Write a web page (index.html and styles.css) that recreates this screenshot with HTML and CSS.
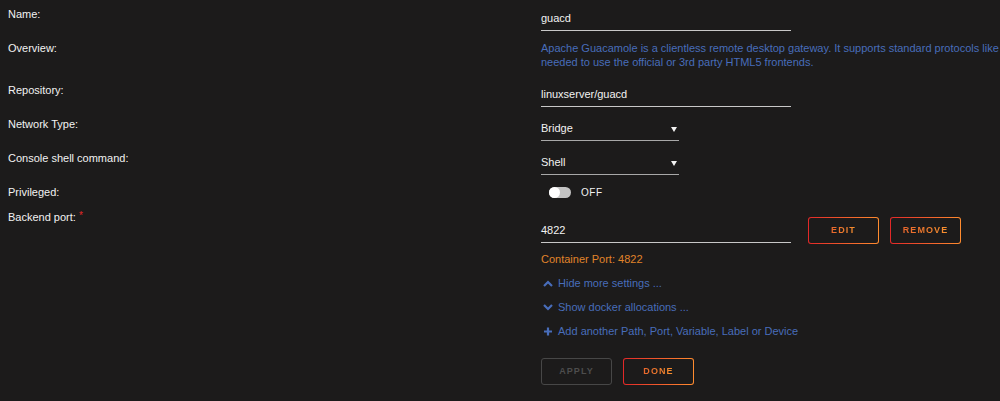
FILE: index.html
```html
<!DOCTYPE html>
<html lang="en">
<head>
  <meta charset="UTF-8" />
  <title>Update Container</title>
  <link rel="stylesheet" href="styles.css">
</head>
<body>
  <div class="form">
    <div class="row">
      <div class="label">Name:</div>
      <div class="value"><div class="field">guacd</div></div>
    </div>
    <div class="row overview-row">
      <div class="label">Overview:</div>
      <div class="value overview">Apache Guacamole is a clientless remote desktop gateway. It supports standard protocols like<br>needed to use the official or 3rd party HTML5 frontends.</div>
    </div>
    <div class="row">
      <div class="label">Repository:</div>
      <div class="value"><div class="field">linuxserver/guacd</div></div>
    </div>
    <div class="row">
      <div class="label">Network Type:</div>
      <div class="value"><div class="field select">Bridge<span class="caret"></span></div></div>
    </div>
    <div class="row">
      <div class="label">Console shell command:</div>
      <div class="value"><div class="field select">Shell<span class="caret"></span></div></div>
    </div>
    <div class="row">
      <div class="label">Privileged:</div>
      <div class="value switch-row">
        <span class="switch"><span class="knob"></span></span>
        <span class="switch-text">OFF</span>
      </div>
    </div>
    <div class="row">
      <div class="label">Backend port: <span class="req">*</span></div>
      <div class="value port-row">
        <div class="field">4822</div>
        <button class="btn"><span>Edit</span></button>
        <button class="btn"><span>Remove</span></button>
      </div>
    </div>
  </div>

  <div class="extra">
    <div class="note">Container Port: 4822</div>
    <div class="link">
      <svg width="10" height="7" viewBox="0 0 10 7"><path d="M1 6 L5 2 L9 6" fill="none" stroke="#486dba" stroke-width="2.2"/></svg>
      Hide more settings ...
    </div>
    <div class="link">
      <svg width="10" height="7" viewBox="0 0 10 7"><path d="M1 1 L5 5 L9 1" fill="none" stroke="#486dba" stroke-width="2.2"/></svg>
      Show docker allocations ...
    </div>
    <div class="link">
      <svg width="10" height="9" viewBox="0 0 10 9"><path d="M5 0.5 V8.5 M1 4.5 H9" fill="none" stroke="#486dba" stroke-width="2.2"/></svg>
      Add another Path, Port, Variable, Label or Device
    </div>
    <div class="actions">
      <button class="btn disabled"><span>Apply</span></button>
      <button class="btn"><span>Done</span></button>
    </div>
  </div>
</body>
</html>
```

FILE: styles.css
```css
body {
  margin: 0;
  background-color: #1c1b1b;
  color: #f2f2f2;
  font-family: "Liberation Sans", Arial, sans-serif;
  font-size: 11px;
  overflow: hidden;
}
.form { padding-top: 7px; }
.row {
  display: grid;
  grid-template-columns: 533px 1fr;
  padding-left: 8px;
  align-items: start;
}
.row + .row { margin-top: 10px; }
.overview-row { padding-bottom: 4px; }
.label { line-height: 14px; }
.req { color: #e22828; font-size: 10px; vertical-align: 2px; }
.value { min-width: 0; }

.field {
  box-sizing: border-box;
  width: 250px;
  height: 24px;
  padding-top: 4px;
  line-height: 15px;
  border-bottom: 1px solid #c8c8c8;
}
.select {
  width: 138px;
  display: flex;
  justify-content: space-between;
  border-bottom-color: #a8a8a8;
}
.caret {
  width: 0;
  height: 0;
  margin: 6px 2px 0 0;
  border-left: 3px solid transparent;
  border-right: 3px solid transparent;
  border-top: 5px solid #f2f2f2;
}

.overview {
  color: #486dba;
  line-height: 14px;
  white-space: nowrap;
}

.switch-row {
  display: flex;
  align-items: center;
  height: 14px;
  padding-left: 8px;
  gap: 10px;
}
.switch {
  display: block;
  width: 22px;
  height: 11px;
  border-radius: 6px;
  background: #c4c4c4;
  position: relative;
}
.knob {
  position: absolute;
  left: 0;
  top: 0;
  width: 11px;
  height: 11px;
  border-radius: 50%;
  background: #ffffff;
}
.switch-text { font-size: 10px; letter-spacing: 0.5px; }

.port-row {
  display: flex;
  align-items: center;
  padding-top: 8px;
  height: 27px;
}
.port-row .field { margin-right: 17px; }
.port-row .btn + .btn { margin-left: 11px; }

.btn {
  box-sizing: border-box;
  width: 71px;
  height: 27px;
  padding: 0 0 2px;
  border: 1px solid transparent;
  border-radius: 3px;
  background: linear-gradient(#1c1b1b, #1c1b1b) padding-box,
              linear-gradient(90deg, #e22828, #ff8c2f) border-box;
  font-family: "Liberation Sans", Arial, sans-serif;
  font-size: 9px;
  font-weight: bold;
  letter-spacing: 1.1px;
  text-transform: uppercase;
  cursor: pointer;
}
.btn span {
  background: linear-gradient(90deg, #e9662c, #f8912f);
  -webkit-background-clip: text;
  background-clip: text;
  color: transparent;
}
.btn.disabled {
  background: #1c1b1b;
  border-color: #474747;
}
.btn.disabled span {
  background: none;
  color: #4d4d4d;
}

.extra {
  padding-left: 541px;
  margin-top: 3px;
}
.note, .link { line-height: 24px; }
.note { color: #e0842a; }
.link {
  color: #486dba;
  display: flex;
  align-items: center;
  gap: 5px;
  padding-left: 2px;
}
.actions {
  display: flex;
  gap: 11px;
  margin-top: 15px;
}
```
